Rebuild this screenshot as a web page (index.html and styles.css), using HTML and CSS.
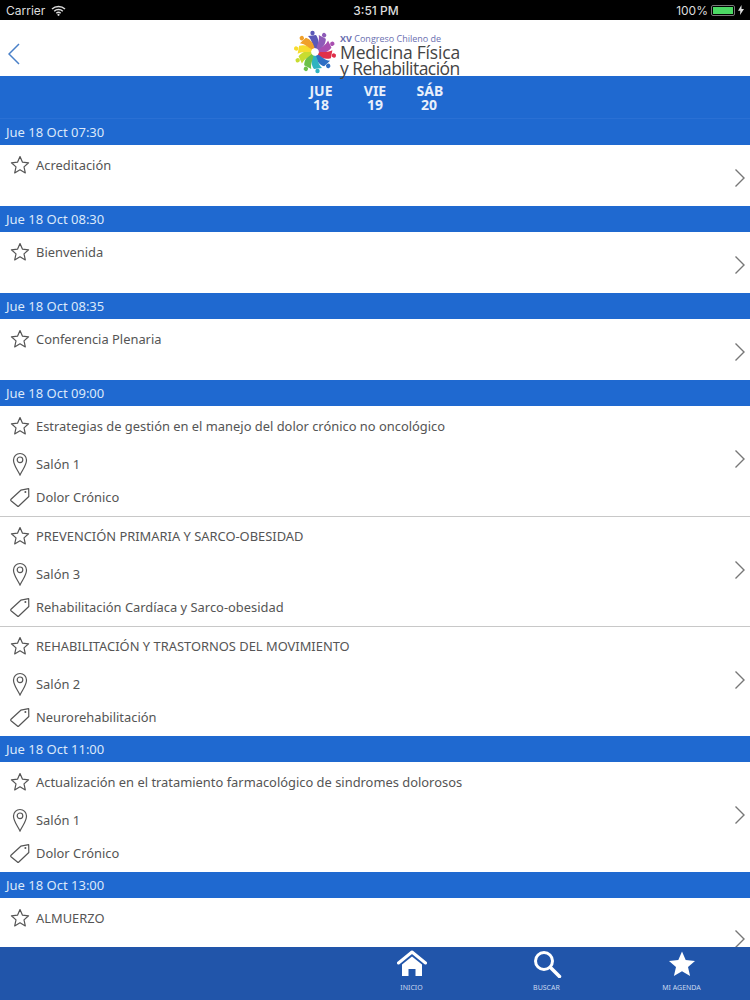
FILE: index.html
```html
<!DOCTYPE html>
<html lang="es">
<head>
    <meta charset="UTF-8">
    <title>Agenda</title>
    <link rel="stylesheet" href="styles.css">
</head>
<body>
    <svg class="defs" width="0" height="0">
        <defs>
            <symbol id="star" viewBox="0 0 20 20">
                <path d="M10 1.600l2.500 5.600 6.100.6-4.600 4.100 1.300 6-5.300-3.100-5.300 3.100 1.300-6L1.400 7.800l6.100-.6z" fill="none" stroke="#555" stroke-width="1.200" stroke-linejoin="round"/>
            </symbol>
            <symbol id="pin" viewBox="0 0 20 24">
                <path d="M10 23C7.500 17.500 3.500 13.500 3.500 8a6.500 6.500 0 0 1 13 0c0 5.500-4 9.500-6.500 15z" fill="none" stroke="#555" stroke-width="1.200"/>
                <circle cx="10" cy="7.800" r="2.800" fill="none" stroke="#555" stroke-width="1.200"/>
            </symbol>
            <symbol id="tag" viewBox="0 0 20 20">
                <path d="M1 12.300L10.800 3.200 18.700 1.700 18.800 9.500 8.800 19a1 1 0 0 1-1.400 0L1 13.700a1 1 0 0 1 0-1.400z" fill="none" stroke="#555" stroke-width="1.200" stroke-linejoin="round"/>
                <circle cx="15.400" cy="5" r="1" fill="#555"/>
            </symbol>
            <symbol id="chev" viewBox="0 0 12 20">
                <path d="M1.500 1.500L10 10l-8.500 8.500" fill="none" stroke="#777" stroke-width="1.400"/>
            </symbol>
            <g id="petal">
                <path d="M-1-4C-3-8-3-12-7-16L1-17C4-13 4-8 2-3.500z"/>
                <circle cx="-2.500" cy="-19" r="2.200"/>
            </g>
        </defs>
    </svg>

    <div class="app">
        <!-- barra de estado -->
        <div class="status">
            <div class="status-left">
                <span>Carrier</span>
                <svg width="15" height="11" viewBox="0 0 15 11">
                    <path d="M1 4a9.500 9.500 0 0 1 13 0M3.200 6.300a6.300 6.300 0 0 1 8.600 0M5.300 8.300a3.300 3.300 0 0 1 4.400 0" fill="none" stroke="#ddd" stroke-width="1.500"/>
                    <circle cx="7.500" cy="9.800" r="1.100" fill="#ddd"/>
                </svg>
            </div>
            <div class="status-time">3:51 PM</div>
            <div class="status-right">
                <span>100%</span>
                <div class="battery"><div class="battery-fill"></div></div>
                <svg width="6" height="10" viewBox="0 0 6 10"><path d="M3.500 0L0 5.800h2.300L2 10l4-6H3.500z" fill="#ddd"/></svg>
            </div>
        </div>

        <!-- cabecera -->
        <div class="header">
            <svg class="back" width="12" height="22" viewBox="0 0 12 22"><path d="M11 1L1 11l10 10" fill="none" stroke="#4a80c8" stroke-width="1.500"/></svg>
            <div class="logo">
                <svg class="wheel" width="44" height="44" viewBox="-22 -22 44 44">
                    <use href="#petal" fill="#5a58b8"/>
                    <use href="#petal" fill="#8e5bb8" transform="rotate(36)"/>
                    <use href="#petal" fill="#a94fb0" transform="rotate(72)"/>
                    <use href="#petal" fill="#e0304a" transform="rotate(108)"/>
                    <use href="#petal" fill="#2f6fc4" transform="rotate(144)"/>
                    <use href="#petal" fill="#2fb3c0" transform="rotate(180)"/>
                    <use href="#petal" fill="#6cc04a" transform="rotate(216)"/>
                    <use href="#petal" fill="#c8dc30" transform="rotate(252)"/>
                    <use href="#petal" fill="#f7dc2e" transform="rotate(288)"/>
                    <use href="#petal" fill="#f0a02a" transform="rotate(324)"/>
                </svg>
                <div class="logo-text">
                    <div class="logo-small"><b>XV</b> Congreso Chileno de</div>
                    <div class="logo-big">Medicina Física</div>
                    <div class="logo-big tight">y Rehabilitación</div>
                </div>
            </div>
        </div>

        <!-- dias -->
        <div class="days">
            <div class="day">JUE<br>18</div>
            <div class="day">VIE<br>19</div>
            <div class="day">SÁB<br>20</div>
        </div>

        <!-- lista -->
        <div class="list">
            <div class="date">Jue 18 Oct 07:30</div>
            <div class="row short">
                <div class="info">
                    <div class="line"><svg class="ico"><use href="#star"/></svg>Acreditación</div>
                </div>
                <svg class="chev"><use href="#chev"/></svg>
            </div>

            <div class="date">Jue 18 Oct 08:30</div>
            <div class="row short">
                <div class="info">
                    <div class="line"><svg class="ico"><use href="#star"/></svg>Bienvenida</div>
                </div>
                <svg class="chev"><use href="#chev"/></svg>
            </div>

            <div class="date">Jue 18 Oct 08:35</div>
            <div class="row short">
                <div class="info">
                    <div class="line"><svg class="ico"><use href="#star"/></svg>Conferencia Plenaria</div>
                </div>
                <svg class="chev"><use href="#chev"/></svg>
            </div>

            <div class="date">Jue 18 Oct 09:00</div>
            <div class="row tall">
                <div class="info">
                    <div class="line"><svg class="ico"><use href="#star"/></svg>Estrategias de gestión en el manejo del dolor crónico no oncológico</div>
                    <div class="line place"><svg class="ico pin"><use href="#pin"/></svg>Salón 1</div>
                    <div class="line topic"><svg class="ico"><use href="#tag"/></svg>Dolor Crónico</div>
                </div>
                <svg class="chev"><use href="#chev"/></svg>
            </div>
            <div class="row tall next">
                <div class="info">
                    <div class="line"><svg class="ico"><use href="#star"/></svg>PREVENCIÓN PRIMARIA Y SARCO-OBESIDAD</div>
                    <div class="line place"><svg class="ico pin"><use href="#pin"/></svg>Salón 3</div>
                    <div class="line topic"><svg class="ico"><use href="#tag"/></svg>Rehabilitación Cardíaca y Sarco-obesidad</div>
                </div>
                <svg class="chev"><use href="#chev"/></svg>
            </div>
            <div class="row tall next">
                <div class="info">
                    <div class="line"><svg class="ico"><use href="#star"/></svg>REHABILITACIÓN Y TRASTORNOS DEL MOVIMIENTO</div>
                    <div class="line place"><svg class="ico pin"><use href="#pin"/></svg>Salón 2</div>
                    <div class="line topic"><svg class="ico"><use href="#tag"/></svg>Neurorehabilitación</div>
                </div>
                <svg class="chev"><use href="#chev"/></svg>
            </div>

            <div class="date">Jue 18 Oct 11:00</div>
            <div class="row tall">
                <div class="info">
                    <div class="line"><svg class="ico"><use href="#star"/></svg>Actualización en el tratamiento farmacológico de sindromes dolorosos</div>
                    <div class="line place"><svg class="ico pin"><use href="#pin"/></svg>Salón 1</div>
                    <div class="line topic"><svg class="ico"><use href="#tag"/></svg>Dolor Crónico</div>
                </div>
                <svg class="chev"><use href="#chev"/></svg>
            </div>

            <div class="date">Jue 18 Oct 13:00</div>
            <div class="row last">
                <div class="info">
                    <div class="line"><svg class="ico"><use href="#star"/></svg>ALMUERZO</div>
                </div>
                <svg class="chev"><use href="#chev"/></svg>
            </div>
        </div>

        <!-- menu inferior -->
        <div class="tabbar">
            <div class="tab">
                <svg width="30" height="28" viewBox="0 0 30 28">
                    <path d="M1.500 13L15 2l13.500 11" fill="none" stroke="#fff" stroke-width="3" stroke-linecap="round" stroke-linejoin="round"/>
                    <path d="M5 14.500L15 6.500l10 8V26H18.500v-7h-7v7H5z" fill="#fff"/>
                </svg>
                <span>INICIO</span>
            </div>
            <div class="tab">
                <svg width="30" height="28" viewBox="0 0 30 28">
                    <circle cx="12" cy="11" r="8.500" fill="none" stroke="#fff" stroke-width="3"/>
                    <path d="M18.500 17.500L27.500 26.500" stroke="#fff" stroke-width="3.500" stroke-linecap="round"/>
                </svg>
                <span>BUSCAR</span>
            </div>
            <div class="tab">
                <svg width="30" height="28" viewBox="0 0 30 28">
                    <path d="M15 1.500l3.700 8.600 9.300.8-7 6.100 2.100 9.100-8.100-4.800-8.100 4.800 2.100-9.100-7-6.100 9.300-.8z" fill="#fff"/>
                </svg>
                <span>MI AGENDA</span>
            </div>
        </div>
    </div>
</body>
</html>
```

FILE: styles.css
```css
* {
    box-sizing: border-box;
}
body {
    margin: 0;
    font-family: "Noto Sans", Arial, sans-serif;
    background: #fff;
}
.defs {
    position: absolute;
}
.app {
    width: 750px;
    height: 1000px;
    display: flex;
    flex-direction: column;
    overflow: hidden;
}
.status {
    height: 20px;
    flex: none;
    background: #000;
    color: #ddd;
    font-family: Inter, "Liberation Sans", Arial, sans-serif;
    font-size: 12px;
    display: flex;
    align-items: center;
    justify-content: space-between;
    padding: 0 6px;
}
.status-left, .status-right {
    width: 150px;
    display: flex;
    align-items: center;
    gap: 6px;
}
.status-right {
    justify-content: flex-end;
    gap: 3px;
}
.status-time {
    font-weight: 500;
    margin-left: 2px;
}
.battery {
    width: 24px;
    height: 11px;
    border: 1px solid #777;
    border-radius: 2px;
    padding: 1px;
}
.battery-fill {
    height: 100%;
    background: #4cd964;
}
.header {
    height: 56px;
    flex: none;
    background: #fff;
    display: flex;
    align-items: center;
    justify-content: center;
    position: relative;
}
.back {
    position: absolute;
    left: 8px;
    top: 23px;
}
.logo {
    display: flex;
    align-items: center;
    gap: 3px;
    margin-left: 3px;
}
.wheel {
    margin-top: 8px;
}
.logo-text {
    color: #444;
    padding-top: 12px;
    font-family: "Open Sans", Arial, sans-serif;
}
.logo-small {
    font-size: 9px;
    line-height: 11px;
    color: #6a6fb0;
}
.logo-big {
    font-size: 17.500px;
    line-height: 16px;
    letter-spacing: -0.200px;
    white-space: nowrap;
}
.logo-big.tight {
    letter-spacing: -0.550px;
}
.days {
    height: 43px;
    flex: none;
    background: #1f69d0;
    color: #e8f0fb;
    display: flex;
    justify-content: center;
    align-items: center;
    gap: 29px;
    font-size: 14px;
    font-weight: bold;
    line-height: 14px;
    text-align: center;
    padding-top: 1px;
    border-bottom: 1px solid #2a70d4;
}
.day {
    width: 25px;
}
.list {
    flex: 1;
    overflow: hidden;
}
.date {
    height: 26px;
    background: #1f69d0;
    color: #dbe8fa;
    font-size: 13px;
    line-height: 26px;
    padding-left: 6px;
}
.row {
    display: flex;
    align-items: flex-start;
    justify-content: space-between;
    padding: 0 4px 0 10px;
    background: #fff;
    color: #555;
    font-size: 12.900px;
}
.row.short {
    height: 61px;
}
.row.tall {
    height: 110px;
}
.row.next {
    border-top: 1px solid #c8c8c8;
}
.row.next .info {
    padding-top: 9px;
}
.row.last {
    height: 50px;
}
.info {
    padding-top: 10px;
}
.line {
    display: flex;
    align-items: center;
    height: 20px;
    white-space: nowrap;
}
.place {
    margin-top: 18px;
}
.topic {
    margin-top: 13px;
}
.ico {
    width: 20px;
    height: 20px;
    margin-right: 6px;
    flex: none;
}
.ico.pin {
    height: 24px;
}
.chev {
    width: 12px;
    height: 20px;
    flex: none;
}
.short .chev {
    margin-top: 23px;
}
.tall .chev {
    margin-top: 43px;
}
.last .chev {
    margin-top: 31px;
}
.tabbar {
    height: 53px;
    flex: none;
    background: #2155aa;
    color: #c9d8ef;
    display: flex;
    padding-left: 344px;
}
.tab {
    width: 135px;
    display: flex;
    flex-direction: column;
    align-items: center;
    padding-top: 3px;
    font-size: 7px;
}
.tab span {
    margin-top: 5px;
}
```
